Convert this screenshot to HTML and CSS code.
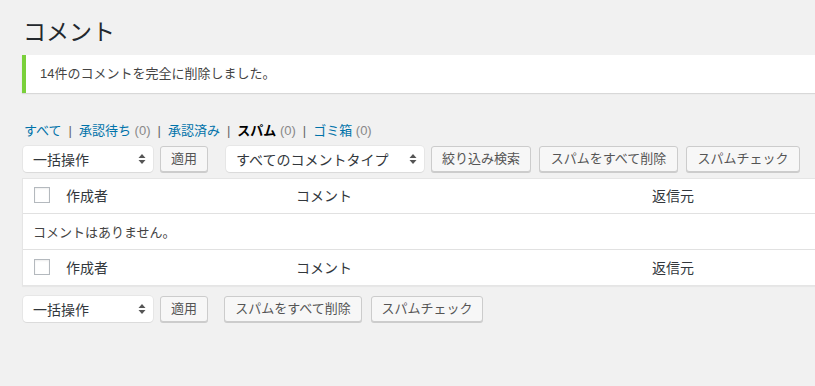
FILE: index.html
```html
<!DOCTYPE html>
<html lang="ja">
<head>
<meta charset="utf-8">
<title>コメント</title>
<link rel="stylesheet" href="styles.css">
</head>
<body>
<div class="wrap">
  <h1 class="title">コメント</h1>
  <div class="notice"><p>14件のコメントを完全に削除しました。</p></div>

  <ul class="subsubsub">
    <li><a href="#">すべて</a><span class="sep">|</span></li>
    <li><a href="#">承認待ち <span class="count">(0)</span></a><span class="sep">|</span></li>
    <li><a href="#">承認済み</a><span class="sep">|</span></li>
    <li><a href="#" class="current">スパム <span class="count">(0)</span></a><span class="sep">|</span></li>
    <li><a href="#">ゴミ箱 <span class="count">(0)</span></a></li>
  </ul>

  <div class="tablenav top">
    <div class="select w130"><span>一括操作</span>
      <svg class="arr" width="8" height="12" viewBox="0 0 8 12"><path d="M4 1 L7.5 5 H0.5 Z M4 11 L7.5 7 H0.5 Z" fill="#555"/></svg>
    </div>
    <button class="btn w48">適用</button>
    <div class="select w198 ml18"><span>すべてのコメントタイプ</span>
      <svg class="arr" width="8" height="12" viewBox="0 0 8 12"><path d="M4 1 L7.5 5 H0.5 Z M4 11 L7.5 7 H0.5 Z" fill="#555"/></svg>
    </div>
    <button class="btn w100">絞り込み検索</button>
    <button class="btn w139 ml8">スパムをすべて削除</button>
    <button class="btn w114 ml8">スパムチェック</button>
  </div>

  <div class="table">
    <div class="row head">
      <div class="cb"><span class="box"></span></div>
      <div class="cell">作成者</div>
      <div class="cell">コメント</div>
      <div class="cell">返信元</div>
    </div>
    <div class="row empty">
      <div class="cell">コメントはありません。</div>
    </div>
    <div class="row foot">
      <div class="cb"><span class="box"></span></div>
      <div class="cell">作成者</div>
      <div class="cell">コメント</div>
      <div class="cell">返信元</div>
    </div>
  </div>

  <div class="tablenav bottom">
    <div class="select w130"><span>一括操作</span>
      <svg class="arr" width="8" height="12" viewBox="0 0 8 12"><path d="M4 1 L7.5 5 H0.5 Z M4 11 L7.5 7 H0.5 Z" fill="#555"/></svg>
    </div>
    <button class="btn w48">適用</button>
    <button class="btn w138 ml16">スパムをすべて削除</button>
    <button class="btn w112 ml9">スパムチェック</button>
  </div>
</div>
</body>
</html>
```

FILE: styles.css
```css
html, body {
  margin: 0;
  padding: 0;
  background: #f1f1f1;
  overflow: hidden;
}
body {
  font-family: "Liberation Sans", "Noto Sans CJK JP", sans-serif;
  font-size: 13px;
  color: #444;
}
.wrap {
  width: 1100px;
  padding-left: 22px;
}
.title {
  margin: 0;
  padding: 18px 0 4px 1px;
  font-size: 23px;
  font-weight: 400;
  line-height: 28px;
  color: #23282d;
}
.notice {
  margin-top: 5px;
  background: #fff;
  border-left: 4px solid #7ad03a;
  box-shadow: 0 1px 1px rgba(0,0,0,0.1);
  padding: 8px 12px 8px 14px;
}
.notice p {
  margin: 0;
  line-height: 22px;
  color: #444;
}
.subsubsub {
  list-style: none;
  margin: 25px 0 0;
  padding: 0 0 0 2px;
  display: flex;
  line-height: 26px;
  height: 24px;
  color: #555;
}
.subsubsub li { white-space: pre; }
.subsubsub a {
  color: #0073aa;
  text-decoration: none;
}
.subsubsub a.current {
  color: #000;
  font-weight: 700;
}
.subsubsub .count {
  color: #888;
  font-weight: 400;
}
.subsubsub .sep {
  color: #666;
  padding: 0 7px 0 7px;
}
.tablenav {
  display: flex;
  align-items: flex-start;
  height: 27px;
  padding-left: 1px;
}
.tablenav.top { margin-top: 4px; }
.tablenav.bottom { margin-top: 10px; }
.select {
  box-sizing: border-box;
  height: 26px;
  background: #fff;
  border-radius: 4px;
  box-shadow: 0 0 0 1px rgba(0,0,0,0.04), 0 1px 1px rgba(0,0,0,0.06);
  display: flex;
  align-items: center;
  justify-content: space-between;
  padding: 0 7px 0 10px;
  font-size: 14px;
  color: #32373c;
  margin-right: 7px;
}
.select .arr { flex: none; }
.w130 { width: 130px; }
.w198 { width: 198px; }
.btn {
  box-sizing: border-box;
  height: 26px;
  margin: 0;
  padding: 0;
  font-family: inherit;
  font-size: 13px;
  line-height: 24px;
  color: #555;
  background: #f7f7f7;
  border: 1px solid #ccc;
  border-radius: 3px;
  box-shadow: 0 1px 0 #ccc;
  text-align: center;
}
.w48 { width: 48px; }
.w100 { width: 100px; }
.w139 { width: 139px; }
.w138 { width: 138px; }
.w114 { width: 114px; }
.w112 { width: 112px; }
.ml18 { margin-left: 18px; }
.ml16 { margin-left: 16px; }
.ml8 { margin-left: 8px; }
.ml9 { margin-left: 9px; }
.table {
  margin-top: 5px;
  background: #fff;
  border: 1px solid #e5e5e5;
  box-shadow: 0 1px 1px rgba(0,0,0,0.04);
}
.row {
  display: grid;
  grid-template-columns: 33px 230px 356px 1fr;
  align-items: center;
  color: #32373c;
  box-sizing: border-box;
}
.row.head {
  height: 35px;
  border-bottom: 1px solid #e1e1e1;
  font-size: 14px;
  padding-bottom: 2px;
}
.row.foot {
  height: 36px;
  border-top: 1px solid #e1e1e1;
  font-size: 14px;
  padding-bottom: 1px;
}
.row.empty {
  display: flex;
  height: 35px;
  color: #444;
}
.cell { padding-left: 10px; }
.cb {
  display: flex;
  align-items: center;
  padding-left: 11px;
}
.box {
  display: block;
  box-sizing: border-box;
  width: 16px;
  height: 16px;
  border: 1px solid #b4b9be;
  background: #fff;
  box-shadow: inset 0 1px 2px rgba(0,0,0,0.07);
}
```
